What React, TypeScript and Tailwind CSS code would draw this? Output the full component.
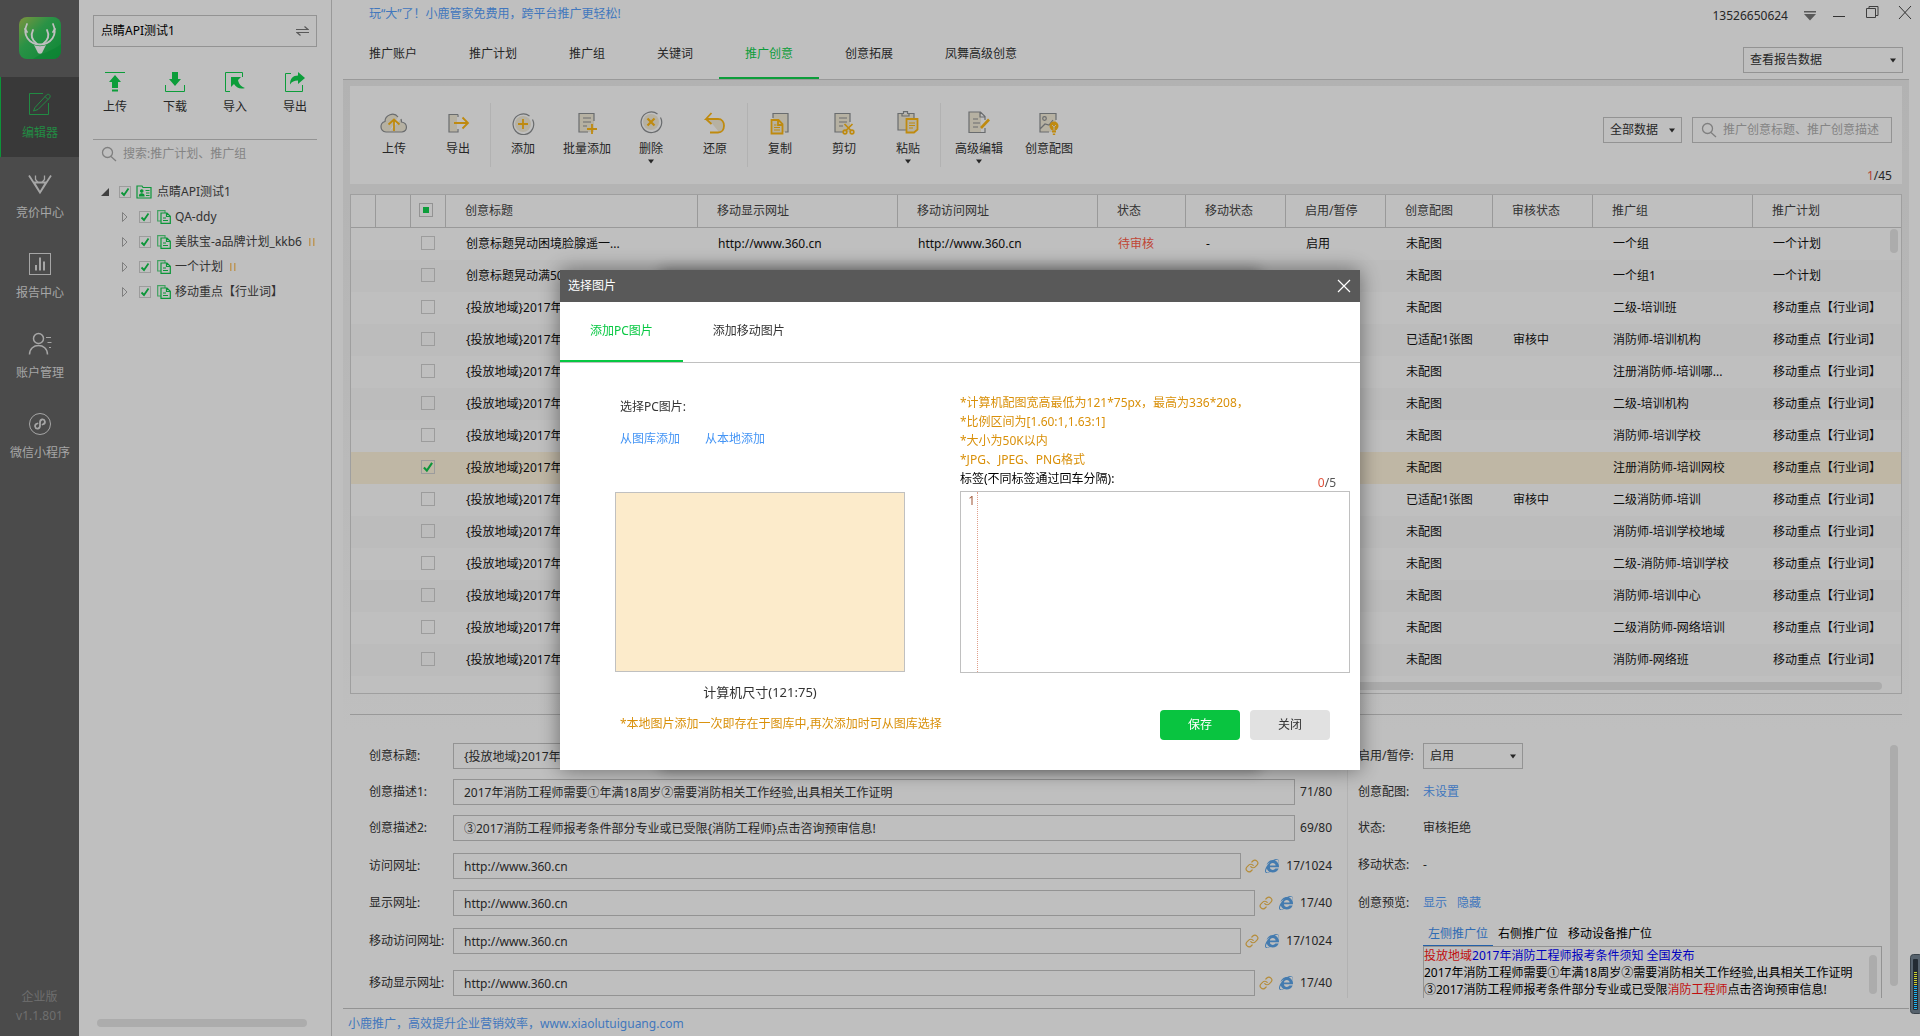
import { useState } from 'react';
import type { ReactNode } from 'react';
import { Link as LinkIcon } from 'lucide-react';
import { FaInternetExplorer } from 'react-icons/fa';

const NAV = [
  { id: 'editor', label: '编辑器' },
  { id: 'bid', label: '竞价中心' },
  { id: 'report', label: '报告中心' },
  { id: 'account', label: '账户管理' },
  { id: 'mini', label: '微信小程序' },
];

const TABS = ['推广账户', '推广计划', '推广组', '关键词', '推广创意', '创意拓展', '凤舞高级创意'];

const PLANS = [
  { name: 'QA-ddy', paused: false },
  { name: '美肤宝-a品牌计划_kkb6', paused: true },
  { name: '一个计划', paused: true },
  { name: '移动重点【行业词】', paused: false },
];

const KEY_PLAN = '移动重点【行业词】';
const LONG_TITLE = '{投放地域}2017年';

type Row = {
  title: string;
  url?: string;
  status?: string;
  mobile?: string;
  enabled?: string;
  image: string;
  review?: string;
  group: string;
  plan: string;
};

const ROWS: Row[] = [
  {
    title: '创意标题晃动困境脸腺遥一...',
    url: 'http://www.360.cn',
    status: '待审核',
    mobile: '-',
    enabled: '启用',
    image: '未配图',
    group: '一个组',
    plan: '一个计划',
  },
  { title: '创意标题晃动满50', image: '未配图', group: '一个组1', plan: '一个计划' },
  { title: LONG_TITLE, image: '未配图', group: '二级-培训班', plan: KEY_PLAN },
  { title: LONG_TITLE, image: '已适配1张图', review: '审核中', group: '消防师-培训机构', plan: KEY_PLAN },
  { title: LONG_TITLE, image: '未配图', group: '注册消防师-培训哪...', plan: KEY_PLAN },
  { title: LONG_TITLE, image: '未配图', group: '二级-培训机构', plan: KEY_PLAN },
  { title: LONG_TITLE, image: '未配图', group: '消防师-培训学校', plan: KEY_PLAN },
  { title: LONG_TITLE, image: '未配图', group: '注册消防师-培训网校', plan: KEY_PLAN },
  { title: LONG_TITLE, image: '已适配1张图', review: '审核中', group: '二级消防师-培训', plan: KEY_PLAN },
  { title: LONG_TITLE, image: '未配图', group: '消防师-培训学校地域', plan: KEY_PLAN },
  { title: LONG_TITLE, image: '未配图', group: '二级-消防师-培训学校', plan: KEY_PLAN },
  { title: LONG_TITLE, image: '未配图', group: '消防师-培训中心', plan: KEY_PLAN },
  { title: LONG_TITLE, image: '未配图', group: '二级消防师-网络培训', plan: KEY_PLAN },
  { title: LONG_TITLE, image: '未配图', group: '消防师-网络班', plan: KEY_PLAN },
];

const HEADERS = [
  '创意标题',
  '移动显示网址',
  '移动访问网址',
  '状态',
  '移动状态',
  '启用/暂停',
  '创意配图',
  '审核状态',
  '推广组',
  '推广计划',
];

/* ---------- icons ---------- */

function Logo() {
  return (
    <svg width="42" height="42" viewBox="0 0 42 42">
      <defs>
        <linearGradient id="logo" x1="0" y1="0" x2="1" y2="1">
          <stop offset="0" stopColor="#a8c653" />
          <stop offset="0.4" stopColor="#38c35e" />
          <stop offset="1" stopColor="#12b548" />
        </linearGradient>
      </defs>
      <rect width="42" height="42" rx="8" fill="url(#logo)" />
      <path d="M14 42C22 36 34 34 42 27v7a8 8 0 0 1-8 8z" fill="#0fae42" opacity="0.6" />
      <g fill="none" stroke="#fff" strokeWidth="1.8" strokeLinecap="round">
        <path d="M8 7C3 18 10 27 21 27.500C32 27 39 18 34 7" />
        <path d="M14 13c-3 6 0 11 4 14M28 13c3 6 0 11-4 14M6 12l2 3M36 12l-2 3" />
      </g>
      <path d="M15 28c3 1.500 9 1.500 12 0l-4 8c-1 1-3 1-4 0z" fill="#fff" />
    </svg>
  );
}

function NavIcon({ id }: { id: string }) {
  return (
    <svg width="24" height="24" viewBox="0 0 24 24" fill="none" stroke="currentColor">
      {id === 'editor' && (
        <>
          <path d="M15 1.5H1.5V22.5H20.5V11" />
          <path d="M7 15.5L18.5 3c2-2 5 .5 3 3L10 17.5l-4.500 1.500zM17 4.500l3 3" />
        </>
      )}
      {id === 'bid' && (
        <g strokeWidth="1.8">
          <path d="M1 3.500L12 20.500L23 3.500M5.500 10.500h13M12 20.500L6 10.500M12 20.500L18 10.500" />
          <path d="M7.500 3.500V7.500L10 10.500M16.500 3.500V7.500L14 10.500" strokeWidth="1.3" />
        </g>
      )}
      {id === 'report' && (
        <>
          <rect x="1.5" y="1.5" width="21" height="21" />
          <path d="M8 18.500V13M12 18.500V5.500M16 18.500V9.500" strokeWidth="2" />
        </>
      )}
      {id === 'account' && (
        <>
          <circle cx="10.5" cy="6.5" r="5" strokeWidth="1.5" />
          <path d="M1.500 22.500c0-12 18-12 18 0" strokeWidth="1.5" />
          <path d="M18 5.500h5M19.500 10.500h4M21 15.500h2" />
        </>
      )}
      {id === 'mini' && (
        <>
          <circle cx="12" cy="12" r="10.5" />
          <path
            d="M9.500 11.500c-4 1-2.500 5.500.5 5c1.500-.3 2-1.500 2-3v-3c0-1.500.5-2.700 2-3c3-.5 4.500 4 .5 5"
            strokeWidth="1.8"
            strokeLinecap="round"
          />
        </>
      )}
    </svg>
  );
}

function TransferIcon({ id }: { id: string }) {
  return (
    <svg width="22" height="22" viewBox="0 0 22 22" className="fill-[#10d24e] stroke-[#10d24e]">
      {id === '上传' && (
        <>
          <path d="M1 1.500h20" fill="none" />
          <path d="M11 4l6 7h-3v6H8v-6H5zM8 18.500h6v2H8z" stroke="none" />
        </>
      )}
      {id === '下载' && (
        <>
          <path d="M8 1h6v7h3l-6 7l-6-7h3z" stroke="none" />
          <path d="M1.500 14v6.500h19V14" fill="none" />
        </>
      )}
      {id === '导入' && (
        <>
          <path d="M18.500 6V1.500H1.500V20.500H6" fill="none" />
          <path d="M7 6h10l-3 3c1 5 4 7 7 8c-5 1.500-9-.5-11-4l-3 3z" stroke="none" />
        </>
      )}
      {id === '导出' && (
        <>
          <path d="M7 2.500H1.500V20.500H18.500V14" fill="none" />
          <path d="M14 1l7 6l-7 6V9.500c-4 0-6 1-8 4c0-6 3-9 8-9z" stroke="none" />
        </>
      )}
    </svg>
  );
}

const PAPER = '#f3ecd9';
const LINE = '#8d9093';
const GOLD = '#ffb914';

function ToolIcon({ id }: { id: string }) {
  return (
    <svg width="28" height="24" viewBox="0 0 28 24" fill="none" stroke={LINE} strokeWidth="1.2">
      {id === '上传' && (
        <>
          <path d="M9 21H6C-.5 20-.5 12 5 10.500C5 4 14 .500 18 6M21 8c0 0 .500 2 .500 3C28 12 28 20 22 21H9" fill={PAPER} />
          <path d="M14 20V9M8.500 13.500L14 8.500l5.500 5" stroke={GOLD} strokeWidth="1.8" />
        </>
      )}
      {id === '导出' && (
        <>
          <path d="M5 4h8v17H5z" fill={PAPER} stroke="none" />
          <path d="M14 3.500H5V21h9v-3M14 3.500V6" />
          <path d="M10 12h14M18.500 6.500L24 12l-5.500 5.500" stroke={GOLD} strokeWidth="1.8" />
        </>
      )}
      {id === '添加' && (
        <>
          <circle cx="14" cy="13" r="8" fill={PAPER} stroke="none" />
          <path d="M20.500 5A10.300 10.300 0 1 0 23.500 8.500" />
          <path d="M14 8v10M9 13h10" stroke={GOLD} strokeWidth="1.8" />
        </>
      )}
      {id === '批量添加' && (
        <>
          <path d="M6 2.500h15V21H6z" fill={PAPER} stroke="none" />
          <path d="M15 21H6V2.500H21V10M10 7h8M10 11h8M10 15h4" />
          <path d="M19 13v10M14 18h10" stroke={GOLD} strokeWidth="1.8" />
        </>
      )}
      {id === '删除' && (
        <>
          <circle cx="14" cy="11" r="8" fill={PAPER} stroke="none" />
          <path d="M20.500 3A10.300 10.300 0 1 0 23.500 6.500" />
          <path d="M10.500 7.500l7 7M17.500 7.500l-7 7" stroke={GOLD} strokeWidth="2.2" />
        </>
      )}
      {id === '还原' && (
        <>
          <path d="M8 9h10c7 2 7 10 0 12z" fill={PAPER} stroke="none" />
          <path d="M10.500 2L5 8h12c8 0 8 13.500 0 13.500h-8M5 8l5.500 5" stroke={GOLD} strokeWidth="1.8" />
        </>
      )}
      {id === '复制' && (
        <>
          <path d="M7 2.500h15V21H7z" fill={PAPER} stroke="none" />
          <path d="M7 7V2.500H22V21H19" />
          <path d="M5.500 9h7l4 4v9.500H5.500zM12 9v5h5" fill={PAPER} stroke={GOLD} strokeWidth="1.8" />
          <path d="M8 14h2.500M8 16.500h6M8 19h6" stroke={GOLD} />
        </>
      )}
      {id === '剪切' && (
        <>
          <path d="M5 2.500h15V21H5z" fill={PAPER} stroke="none" />
          <path d="M14 21H5V2.500H20V11M9 7h8M9 11h8M9 15h4" />
          <g stroke={GOLD} strokeWidth="1.7">
            <path d="M14.500 13l7 7M22.500 13l-7 7" />
            <circle cx="15" cy="21" r="1.8" />
            <circle cx="22" cy="21" r="1.8" />
          </g>
        </>
      )}
      {id === '粘贴' && (
        <>
          <path d="M4 3h16v16H4z" fill={PAPER} stroke="none" />
          <path d="M8 2.500H4V19h8M15 2.500h5V7M8 2.500V5h7V2.500H13.500V.700h-4V2.500z" />
          <path d="M12.500 8h11v10.500L20 21.500h-7.500z" fill={PAPER} stroke={GOLD} strokeWidth="1.8" />
          <path d="M15 12h6M15 14.500h6M15 17h4" stroke={GOLD} />
        </>
      )}
      {id === '高级编辑' && (
        <>
          <path d="M4 1h12v20H4z" fill={PAPER} stroke="none" />
          <path d="M20 9V5.500L15.500 1H4V21.500h16V17M15 1v5h5M8 8h5M8 12h7M8 16h5" />
          <path d="M16 17l8-8.500" stroke={GOLD} strokeWidth="2.6" />
        </>
      )}
      {id === '创意配图' && (
        <>
          <path d="M5 2.500h16V21H5z" fill={PAPER} stroke="none" />
          <path d="M14 21H5V2.500H21V9M5 18l5-5l4 1l4-5" />
          <circle cx="9.5" cy="7.5" r="1.8" />
          <circle cx="19" cy="15" r="4.5" fill={GOLD} stroke="none" />
          <path d="M17 19.500h4v2h-4zM17.800 22.500h2.400V24h-2.400z" fill={GOLD} stroke="none" />
          <path d="M17 14l2 2l2-2M19 16v3" stroke={PAPER} strokeWidth="1" />
        </>
      )}
    </svg>
  );
}

function Caret({ className = '' }: { className?: string }) {
  return (
    <svg width="6" height="5" viewBox="0 0 6 5" className={className}>
      <path d="M0 0.500h6L3 4.500z" fill="#333" />
    </svg>
  );
}

function SearchIcon() {
  return (
    <svg width="16" height="16" viewBox="0 0 16 16" fill="none" stroke="#aaa" strokeWidth="1.3" className="shrink-0">
      <circle cx="6.5" cy="6.5" r="5" />
      <path d="M10 10.500l5 4.500" />
    </svg>
  );
}

function CardIcon() {
  return (
    <svg width="16" height="14" viewBox="0 0 16 14" fill="none" stroke="#10c84c" strokeWidth="1.2">
      <path d="M1 1h5l1 1.500h8V13H1z" />
      <path d="M3.500 11c0-3 4.500-3 4.500 0z" fill="#10c84c" />
      <circle cx="5.8" cy="6" r="1.2" fill="#10c84c" />
      <path d="M9.500 5.500h4M10 8h3.500M10 10.500h3.500" />
    </svg>
  );
}

function DocIcon() {
  return (
    <svg width="14" height="14" viewBox="0 0 14 14" fill="none" stroke="#10c84c" strokeWidth="1.2">
      <path d="M4 11H.700V.700H8V3" opacity="0.7" />
      <path d="M4 3h6l3.300 3.300v7H4zM9.500 3v3.500h3.500M6 8h3M6 10.500h5" />
    </svg>
  );
}

/* ---------- shared controls ---------- */

function Check({ checked, label, className = 'size-3' }: { checked?: boolean; label: string; className?: string }) {
  return (
    <span className="relative inline-flex">
      <input
        type="checkbox"
        aria-label={label}
        defaultChecked={checked}
        className={`peer appearance-none border border-[#d0d0d0] ${className}`}
      />
      <svg
        viewBox="0 0 12 12"
        className="pointer-events-none absolute inset-0 hidden h-full w-full peer-checked:block"
        fill="none"
        stroke="#10c84c"
        strokeWidth="1.8"
      >
        <path d="M2.500 6.500L5 9L9.500 2.500" />
      </svg>
    </span>
  );
}

function Select({ id, label, value, className }: { id: string; label: string; value: string; className: string }) {
  return (
    <div className={`relative ${className}`}>
      <select id={id} aria-label={label} className="h-[26px] w-full appearance-none border border-[#c4c4c4] bg-white px-1.5 text-[#333]">
        <option>{value}</option>
      </select>
      <Caret className="pointer-events-none absolute top-[11px] right-[7px]" />
    </div>
  );
}

/* ---------- page parts ---------- */

function Sidebar() {
  return (
    <nav className="flex w-[79px] shrink-0 flex-col bg-[#646464] text-[#dedede]">
      <div className="flex h-[77px] justify-center pt-[17px]">
        <Logo />
      </div>
      {NAV.map((n, i) => (
        <button
          key={n.id}
          className={`flex h-20 flex-col items-center border-l pt-[15px] ${
            i === 0 ? 'border-[#12c44c] bg-[#4d4d4d] text-[#2dba5a]' : 'border-transparent'
          }`}
        >
          <NavIcon id={n.id} />
          <span className="mt-[9px] leading-4">{n.label}</span>
        </button>
      ))}
      <div className="mt-auto pb-[11px] text-center leading-[19px] text-[#949494]">
        <div>企业版</div>
        <div>v1.1.801</div>
      </div>
    </nav>
  );
}

function TreePanel() {
  return (
    <aside className="flex w-[253px] shrink-0 flex-col border-r border-[#ccc] bg-white px-3.5 pt-[15px] text-[#444]">
      <button className="flex h-8 items-center justify-between border border-[#c4c4c4] px-[7px] text-black">
        点睛API测试1
        <svg width="13" height="10" viewBox="0 0 13 10" fill="none" stroke="#777" strokeWidth="1.2">
          <path d="M0 3.500h12L8.500 0.500M13 6.500H1L4.500 9.500" />
        </svg>
      </button>
      <div className="mt-6 flex justify-between px-2.5 text-[#333]">
        {['上传', '下载', '导入', '导出'].map((t) => (
          <button key={t} className="flex flex-col items-center">
            <TransferIcon id={t} />
            <span className="mt-1.5 leading-4">{t}</span>
          </button>
        ))}
      </div>
      <label className="mt-6 flex h-7 items-center gap-1.5 border-t border-[#c4c4c4] pl-2">
        <SearchIcon />
        <input aria-label="搜索" placeholder="搜索:推广计划、推广组" className="min-w-0 flex-1 outline-none placeholder:text-[#b0b0b0]" />
      </label>
      <div className="mt-3 flex h-[25px] items-center pl-2">
        <svg width="8" height="8" viewBox="0 0 8 8">
          <path d="M8 0v8H0z" fill="#555" />
        </svg>
        <span className="ml-2.5 flex items-center gap-[5px]">
          <Check checked label="点睛API测试1" />
          <CardIcon />
          点睛API测试1
        </span>
      </div>
      {PLANS.map((p) => (
        <div key={p.name} className="flex h-[25px] items-center overflow-hidden pl-7 whitespace-nowrap">
          <svg width="8" height="12" viewBox="0 0 8 12" fill="none" stroke="#aaa" className="shrink-0">
            <path d="M1.500 1.500v9L6 6z" />
          </svg>
          <span className="ml-2.5 flex items-center gap-1">
            <Check checked label={p.name} />
            <span className="ml-0.5">
              <DocIcon />
            </span>
            {p.name}
            {p.paused && (
              <svg width="7" height="8" viewBox="0 0 7 8" className="ml-0.5 shrink-0">
                <path d="M1 0h1.500v8H1zM5 0h1.500v8H5z" fill="#fcc976" />
              </svg>
            )}
          </span>
        </div>
      ))}
      <div className="mt-auto mr-2.5 mb-[9px] ml-1 h-2 rounded-full bg-[#e6e6e6]" />
    </aside>
  );
}

function TopBar() {
  return (
    <header>
      <div className="flex h-7 justify-between pr-2 pl-[37px]">
        <a href="#" className="leading-7 text-[#579ffc]">
          玩“大”了！小鹿管家免费用，跨平台推广更轻松!
        </a>
        <div className="flex gap-[15px] text-[#333]">
          <span className="pt-1 leading-6">13526650624</span>
          <button aria-label="菜单">
            <svg width="14" height="28" viewBox="0 0 14 28">
              <path d="M1 11h12v1.500H1zM1 14h12l-6 6.500z" fill="#777" />
            </svg>
          </button>
          <button aria-label="最小化">
            <svg width="14" height="28" viewBox="0 0 14 28">
              <path d="M1 16.500h12" stroke="#444" />
            </svg>
          </button>
          <button aria-label="还原窗口" className="ml-1">
            <svg width="14" height="28" viewBox="0 0 14 28" fill="none" stroke="#555">
              <path d="M1.500 8.500h9v9h-9zM4 8.500v-2h9v9h-2.500" />
            </svg>
          </button>
          <button aria-label="关闭窗口" className="ml-1">
            <svg width="14" height="28" viewBox="0 0 14 28" fill="none" stroke="#444">
              <path d="M1 6l12 13M13 6L1 19" />
            </svg>
          </button>
        </div>
      </div>
      <div className="mx-[11px] flex justify-between border-b border-[#ccc] text-[#333]">
        <div className="flex h-[51px]">
          {TABS.map((t) => (
            <button
              key={t}
              className={`border-b-2 px-[26px] pt-0.5 ${
                t === '推广创意' ? 'border-[#10d24e] text-[#10d24e]' : 'border-transparent'
              }`}
            >
              {t}
            </button>
          ))}
        </div>
        <div className="mr-1.5 self-end pb-1.5">
          <Select id="report" label="报告数据" value="查看报告数据" className="w-40" />
        </div>
      </div>
    </header>
  );
}

function Tool({ label, caret, wide }: { label: string; caret?: boolean; wide?: boolean }) {
  return (
    <button className={`flex flex-col items-center pt-2 ${wide ? 'w-[76px]' : 'w-16'}`}>
      <ToolIcon id={label} />
      <span className="mt-1.5 leading-4">{label}</span>
      {caret && <Caret className="mt-0.5" />}
    </button>
  );
}

function Divider() {
  return <div className="w-px bg-[#eee]" />;
}

function Toolbar() {
  return (
    <div className="bg-white pt-[17px] pr-2.5 pl-3 text-[#333]">
      <div className="flex h-16">
        <Tool label="上传" />
        <Tool label="导出" />
        <Divider />
        <Tool label="添加" />
        <Tool label="批量添加" />
        <Tool label="删除" caret />
        <Tool label="还原" />
        <Divider />
        <Tool label="复制" />
        <Tool label="剪切" />
        <Tool label="粘贴" caret />
        <Divider />
        <Tool label="高级编辑" caret wide />
        <Tool label="创意配图" />
        <div className="ml-auto flex gap-2.5 pt-3.5">
          <Select id="scope" label="数据范围" value="全部数据" className="w-[79px]" />
          <label className="flex h-[26px] w-[200px] items-center gap-1.5 border border-[#c4c4c4] pl-2">
            <SearchIcon />
            <input
              aria-label="搜索创意"
              placeholder="推广创意标题、推广创意描述"
              className="min-w-0 flex-1 outline-none placeholder:text-[#b0b0b0]"
            />
          </label>
        </div>
      </div>
      <div className="text-right leading-[17px]">
        <span className="text-[#f0614c]">1</span>/45
      </div>
    </div>
  );
}

function CreativeTable() {
  return (
    <div className="relative mt-2.5 border border-[#d5d5d5] bg-white pb-[17px]">
      <table className="w-full table-fixed border-separate border-spacing-0 text-left whitespace-nowrap">
        <colgroup>
          <col className="w-[25px]" />
          <col className="w-[35px]" />
          <col className="w-[35px]" />
          <col className="w-[252px]" />
          <col className="w-[200px]" />
          <col className="w-[200px]" />
          <col className="w-[88px]" />
          <col className="w-[100px]" />
          <col className="w-[100px]" />
          <col className="w-[107px]" />
          <col className="w-[100px]" />
          <col className="w-[160px]" />
          <col />
        </colgroup>
        <thead>
          <tr className="h-[33px] text-[#444]">
            <th className="border-r border-b border-[#ccc]" />
            <th className="border-r border-b border-[#ccc]" />
            <th className="border-r border-b border-[#ccc] pl-2 leading-none">
              <span className="relative inline-flex">
                <input type="checkbox" aria-label="全选" className="size-3.5 appearance-none border border-[#c4c4c4]" />
                <span className="pointer-events-none absolute inset-1 bg-[#10d24e]" />
              </span>
            </th>
            {HEADERS.map((h) => (
              <th key={h} className="border-r border-b border-[#ccc] pl-[19px] font-normal last:border-r-0">
                {h}
              </th>
            ))}
          </tr>
        </thead>
        <tbody className="text-[#111]">
          {ROWS.map((r, i) => (
            <tr key={i} className={`h-8 ${i === 7 ? 'bg-[#fff4dd]' : i % 2 ? 'bg-[#fbfbfb]' : ''}`}>
              <td />
              <td />
              <td className="pl-2.5 leading-none">
                <Check checked={i === 7} label={`选择第${i + 1}行`} className="size-3.5" />
              </td>
              <td className="overflow-hidden pl-5">{r.title}</td>
              <td className="pl-5">{r.url}</td>
              <td className="pl-5">{r.url}</td>
              <td className="pl-5 text-[#ff5d49]">{r.status}</td>
              <td className="pl-5">{r.mobile}</td>
              <td className="pl-5">{r.enabled}</td>
              <td className="pl-5">{r.image}</td>
              <td className="pl-5">{r.review}</td>
              <td className="pl-5">{r.group}</td>
              <td className="pl-5">{r.plan}</td>
            </tr>
          ))}
        </tbody>
      </table>
      <div className="absolute top-[34px] right-[3px] h-6 w-2 rounded-full bg-[#e6e6e6]" />
      <div className="absolute right-[19px] bottom-[3px] left-1/2 h-2 rounded-full bg-[#e6e6e6]" />
    </div>
  );
}

function Field({ id, label, value, count, link, gap }: {
  id: string;
  label: string;
  value: string;
  count?: string;
  link?: boolean;
  gap: string;
}) {
  return (
    <div className={`flex h-[26px] items-center ${gap}`}>
      <label htmlFor={id} className="w-[84px] shrink-0">
        {label}
      </label>
      <input id={id} defaultValue={value} className="h-full min-w-0 flex-1 border border-[#c4c4c4] px-2.5 outline-none" />
      {link && (
        <>
          <LinkIcon size={14} strokeWidth={2} className="ml-1 text-[#f2bb4c]" />
          <FaInternetExplorer size={14} className="ml-1.5 text-[#5ba5ea]" />
        </>
      )}
      {count && <span className={link ? 'ml-[7px]' : 'ml-[5px]'}>{count}</span>}
    </div>
  );
}

function InfoRow({ label, gap, children }: { label: string; gap: string; children: ReactNode }) {
  return (
    <div className={`flex h-[26px] items-center ${gap}`}>
      <span className="w-[65px] shrink-0">{label}</span>
      {children}
    </div>
  );
}

function Details() {
  const url = 'http://www.360.cn';
  return (
    <section className="relative mt-5 flex border-t border-[#ccc] text-[#333]">
      <div className="mb-2.5 min-w-0 flex-1 border-r border-[#eee] pt-7 pr-[15px] pl-[19px]">
        <Field id="f1" label="创意标题:" value={LONG_TITLE} gap="" />
        <Field id="f2" label="创意描述1:" value="2017年消防工程师需要①年满18周岁②需要消防相关工作经验,出具相关工作证明" count="71/80" gap="mt-2.5" />
        <Field id="f3" label="创意描述2:" value="③2017消防工程师报考条件部分专业或已受限{消防工程师}点击咨询预审信息!" count="69/80" gap="mt-2.5" />
        <Field id="f4" label="访问网址:" value={url} count="17/1024" link gap="mt-3" />
        <Field id="f5" label="显示网址:" value={url} count="17/40" link gap="mt-[11px]" />
        <Field id="f6" label="移动访问网址:" value={url} count="17/1024" link gap="mt-3" />
        <Field id="f7" label="移动显示网址:" value={url} count="17/40" link gap="mt-4" />
      </div>
      <div className="mb-2.5 flex h-[283px] w-[554px] shrink-0 flex-col overflow-hidden pt-7 pl-2.5">
        <InfoRow label="启用/暂停:" gap="">
          <Select id="enable" label="启用/暂停" value="启用" className="w-[100px]" />
        </InfoRow>
        <InfoRow label="创意配图:" gap="mt-2.5">
          <a href="#" className="text-[#579ffc]">未设置</a>
        </InfoRow>
        <InfoRow label="状态:" gap="mt-2.5">审核拒绝</InfoRow>
        <InfoRow label="移动状态:" gap="mt-3">-</InfoRow>
        <InfoRow label="创意预览:" gap="mt-3">
          <a href="#" className="mr-2.5 text-[#579ffc]">显示</a>
          <a href="#" className="text-[#579ffc]">隐藏</a>
        </InfoRow>
        <div className="mt-1.5 ml-[65px] flex text-black">
          <button className="h-6 border-b border-[#2f80e0] px-[5px] text-[#3f8ff0]">左侧推广位</button>
          <button className="h-6 px-[5px]">右侧推广位</button>
          <button className="h-6 px-[5px]">移动设备推广位</button>
        </div>
        <div className="relative mr-5 ml-[65px] flex-1 border border-b-0 border-[#c4c4c4] leading-[17px] whitespace-nowrap text-black">
          <p className="text-[#0000ff]">
            <span className="text-[#ff1414]">投放地域</span>2017年消防工程师报考条件须知 全国发布
          </p>
          <p>2017年消防工程师需要①年满18周岁②需要消防相关工作经验,出具相关工作证明</p>
          <p>
            ③2017消防工程师报考条件部分专业或已受限<span className="text-[#ff1414]">消防工程师</span>点击咨询预审信息!
          </p>
          <div className="absolute top-2 right-1 bottom-1 w-2 rounded-full bg-[#e6e6e6]" />
        </div>
      </div>
      <div className="absolute top-[30px] right-1 bottom-[22px] w-2 rounded-full bg-[#e6e6e6]" />
    </section>
  );
}

function ImageDialog({ onClose }: { onClose: () => void }) {
  return (
    <div className="fixed inset-0 flex items-center justify-center bg-black/25 pt-1">
      <div className="relative w-[800px]">
        <div className="absolute inset-x-[100px] inset-y-0 shadow-[0_0_14px_rgba(0,0,0,0.35)]" />
        <div role="dialog" aria-label="选择图片" className="relative bg-white shadow-[0_0_20px_rgba(0,0,0,0.45)]">
          <div className="flex h-8 items-center justify-between bg-[#595959] px-2 text-white">
            选择图片
            <button aria-label="关闭" onClick={onClose}>
              <svg width="16" height="16" viewBox="0 0 16 16" stroke="#fff" strokeWidth="1.2">
                <path d="M2 2l12 12M14 2L2 14" />
              </svg>
            </button>
          </div>
          <div className="flex border-b border-[#c0c0c0] text-[#333]">
            <button className="h-[60px] border-b-2 border-[#07c842] px-[30px]">
              <span className="text-[#07c842]">添加PC图片</span>
            </button>
            <button className="h-[60px] border-b-2 border-transparent px-[30px]">添加移动图片</button>
          </div>
          <div className="flex justify-between pr-2.5 pl-[55px]">
            <div className="w-[290px] pt-[34px] text-[#333]">
              <div className="pl-[5px] leading-5">选择PC图片:</div>
              <div className="mt-3 flex gap-[25px] pl-[5px] leading-5 text-[#4595f5]">
                <a href="#">从图库添加</a>
                <a href="#">从本地添加</a>
              </div>
              <div className="mt-[43px] h-[180px] border border-[#c0c0c0] bg-[#fcebcb]" />
              <div className="mt-2.5 text-center text-[13px] leading-5">计算机尺寸(121:75)</div>
            </div>
            <div className="w-[390px] pt-[30px] leading-[19px] text-[#d9900a]">
              <p>*计算机配图宽高最低为121*75px，最高为336*208，</p>
              <p>*比例区间为[1.60:1,1.63:1]</p>
              <p>*大小为50K以内</p>
              <p>*JPG、JPEG、PNG格式</p>
              <div className="flex h-[22px] justify-between pr-3.5">
                <label htmlFor="tags" className="text-black">
                  标签(不同标签通过回车分隔):
                </label>
                <span className="pt-1 text-[#555]">
                  <span className="text-[#e0533d]">0</span>/5
                </span>
              </div>
              <div className="flex h-[182px] border border-[#c0c0c0]">
                <span className="w-[17px] border-r border-dotted border-[#dfa08c] pr-0.5 text-right leading-[17px] text-[#a05a3c]">1</span>
                <textarea id="tags" className="flex-1 resize-none p-1 outline-none" />
              </div>
            </div>
          </div>
          <div className="flex h-[68px] items-start justify-between pr-[30px] pl-[60px]">
            <p className="pt-3 leading-5 text-[#d9900a]">*本地图片添加一次即存在于图库中,再次添加时可从图库选择</p>
            <div className="flex gap-2.5 pt-2">
              <button className="h-[30px] w-20 rounded-sm bg-[#09c440] text-white">保存</button>
              <button onClick={onClose} className="h-[30px] w-20 rounded-sm bg-[#e1e1e1] text-[#333]">
                关闭
              </button>
            </div>
          </div>
        </div>
      </div>
    </div>
  );
}

function LevelMeter() {
  return (
    <svg width="10" height="60" viewBox="0 0 10 60" className="fixed right-0 bottom-[22px]">
      <rect x="0.5" y="0.5" width="12" height="59" rx="3" fill="#56626d" stroke="#39424a" />
      <rect x="3" y="5" width="5" height="51" rx="1" fill="#232b33" />
      <path d="M5.500 18v14" stroke="#cfd22e" strokeWidth="3" strokeDasharray="1 1" />
      <path d="M5.500 32v23" stroke="#1fb4f0" strokeWidth="3" strokeDasharray="1 1" />
    </svg>
  );
}

export default function App() {
  const [open, setOpen] = useState(true);

  return (
    <div className="flex min-h-screen bg-white font-['Noto_Sans','Noto_Sans_CJK_SC',sans-serif] text-[12px] leading-4">
      <Sidebar />
      <TreePanel />
      <main className="flex min-w-0 flex-1 flex-col">
        <TopBar />
        <div className="mx-[11px] flex-1 border-b border-[#c4c4c4] bg-linear-to-b from-[#eee] to-white to-70% px-[7px] pt-1.5">
          <Toolbar />
          <CreativeTable />
          <Details />
        </div>
        <footer className="px-4 pt-[7px] pb-1 text-[#579ffc]">
          小鹿推广，高效提升企业营销效率，
          <a href="#">www.xiaolutuiguang.com</a>
        </footer>
      </main>
      {open && <ImageDialog onClose={() => setOpen(false)} />}
      <LevelMeter />
    </div>
  );
}
